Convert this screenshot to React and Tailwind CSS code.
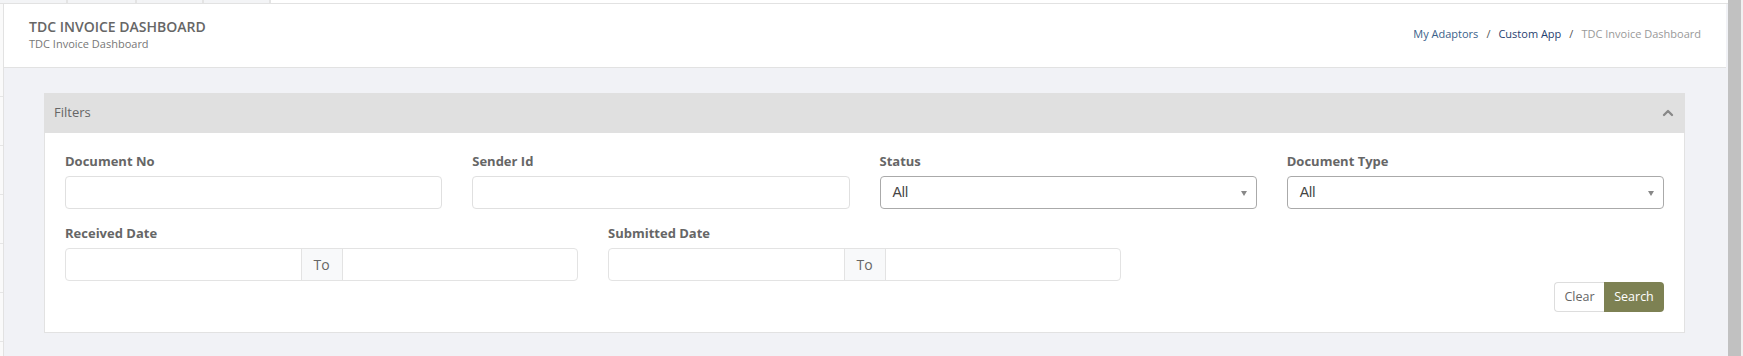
import { ChevronUp } from "lucide-react";

const sideLines = [96, 145, 194, 243, 292, 341];

const Label = ({ children }) => (
  <label className="block text-[13px] font-bold leading-[18px] text-[#666] mb-[6px]">
    {children}
  </label>
);

const TextInput = () => (
  <input
    type="text"
    className="w-full h-[33px] border border-[#e0e0e0] rounded-[4px] bg-white px-3 text-[14px] outline-none"
  />
);

const SelectBox = () => (
  <div className="relative w-full h-[33px] border border-[#aaa] rounded-[4px] bg-white flex items-center pl-[12px]">
    <span className="text-[14px] text-[#444] font-['Liberation_Sans',Arial,sans-serif]">All</span>
    <span className="absolute right-[9px] top-[14px] w-0 h-0 border-l-[3.5px] border-r-[3.5px] border-t-[5px] border-l-transparent border-r-transparent border-t-[#888]" />
  </div>
);

const DateRange = () => (
  <div className="flex h-[33px] w-full border border-[#e3e3e3] rounded-[4px] bg-white">
    <input type="text" className="flex-1 min-w-0 h-full px-3 outline-none bg-transparent" />
    <div className="w-[42px] h-full bg-[#f8f9fa] border-l border-r border-[#e3e3e3] flex items-center justify-center text-[14px] text-[#666]">
      To
    </div>
    <input type="text" className="flex-1 min-w-0 h-full px-3 outline-none bg-transparent" />
  </div>
);

export default function App() {
  return (
    <div className="flex h-[356px] w-full overflow-hidden bg-[#f1f2f6] font-['Open_Sans',sans-serif]">
      {/* page */}
      <div className="flex flex-col w-[1728px]">
        {/* tab strip */}
        <div className="flex h-[4px] border-b border-[#e2e2e2] bg-white">
          <div className="w-[68px] bg-[#f3f4f6] border-r-2 border-[#e4e4e4]" />
          <div className="w-[69px] bg-[#f3f4f6] border-r-2 border-[#e4e4e4]" />
          <div className="w-[67px] bg-[#f3f4f6] border-r-2 border-[#e4e4e4]" />
          <div className="w-[67px] bg-[#f3f4f6] border-r-2 border-[#e4e4e4]" />
        </div>

        <div className="flex flex-1">
          {/* sidebar edge */}
          <div className="relative w-[4px] bg-[#fafafa] border-r border-[#e2e2e2]">
            {sideLines.map((y) => (
              <div
                key={y}
                className="absolute left-0 w-[3px] h-px bg-[#e6e6e6]"
                style={{ top: y - 4 }}
              />
            ))}
          </div>

          <div className="flex-1 flex flex-col">
            {/* page header */}
            <div className="h-[64px] bg-white border-b border-[#e2e2e2] mr-[2px] flex justify-between pl-[25px] pr-[25px]">
              <div className="pt-[13px]">
                <div className="text-[14px] leading-[19px] font-semibold text-[#666]">
                  TDC INVOICE DASHBOARD
                </div>
                <div className="text-[11px] leading-[15px] text-[#777]">TDC Invoice Dashboard</div>
              </div>
              <div className="pt-[22px] text-[11px] leading-[16px] flex">
                <span className="text-[#3b5f8a]">My Adaptors</span>
                <span className="px-[8px] text-[#555]">/</span>
                <span className="text-[#1f416f]">Custom App</span>
                <span className="px-[8px] text-[#555]">/</span>
                <span className="text-[#999]">TDC Invoice Dashboard</span>
              </div>
            </div>

            {/* filters card */}
            <div className="mt-[25px] ml-[40px] mr-[43px]">
              <div className="h-[40px] bg-[#e0e0e0] flex items-center justify-between pl-[10px] pr-[9px]">
                <span className="text-[13px] text-[#666]">Filters</span>
                <ChevronUp size={16} strokeWidth={3.5} className="text-[#888]" />
              </div>
              <div className="bg-white border border-t-0 border-[#e2e2e2] px-[20px] pt-[19px] pb-[20px]">
                <div className="grid grid-cols-4 gap-x-[30px]">
                  <div>
                    <Label>Document No</Label>
                    <TextInput />
                  </div>
                  <div>
                    <Label>Sender Id</Label>
                    <TextInput />
                  </div>
                  <div>
                    <Label>Status</Label>
                    <SelectBox />
                  </div>
                  <div>
                    <Label>Document Type</Label>
                    <SelectBox />
                  </div>
                </div>

                <div className="grid grid-cols-3 gap-x-[30px] mt-[15px]">
                  <div>
                    <Label>Received Date</Label>
                    <DateRange />
                  </div>
                  <div>
                    <Label>Submitted Date</Label>
                    <DateRange />
                  </div>
                </div>

                <div className="flex justify-end mt-px">
                  <button className="h-[30px] w-[50px] border border-[#ddd] border-r-0 rounded-l-[4px] bg-white text-[12.5px] text-[#666]">
                    Clear
                  </button>
                  <button className="h-[30px] w-[60px] rounded-r-[4px] bg-[#7d8153] text-[12.5px] text-white">
                    Search
                  </button>
                </div>
              </div>
            </div>
          </div>
        </div>
      </div>

      {/* scrollbar */}
      <div className="flex w-[15px] h-full">
        <div className="w-[13px] h-full bg-[#c1c1c1]" />
        <div className="w-[2px] h-full bg-[#f1f1f1]" />
      </div>
    </div>
  );
}
